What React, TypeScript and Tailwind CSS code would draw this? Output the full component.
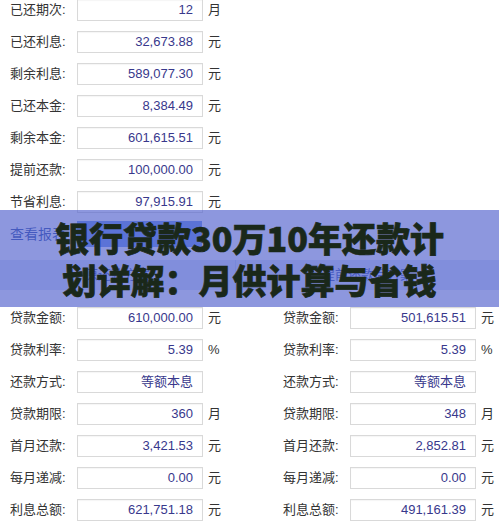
import React from "react";

const cjk = { fontFamily: '"Liberation Sans", "Noto Sans CJK SC", sans-serif' };

type Row = { label: string; value: string; unit?: string };

const topRows: Row[] = [
  { label: "已还期次", value: "12", unit: "月" },
  { label: "已还利息", value: "32,673.88", unit: "元" },
  { label: "剩余利息", value: "589,077.30", unit: "元" },
  { label: "已还本金", value: "8,384.49", unit: "元" },
  { label: "剩余本金", value: "601,615.51", unit: "元" },
  { label: "提前还款", value: "100,000.00", unit: "元" },
  { label: "节省利息", value: "97,915.91", unit: "元" },
];

const oldPlan: Row[] = [
  { label: "贷款金额", value: "610,000.00", unit: "元" },
  { label: "贷款利率", value: "5.39", unit: "%" },
  { label: "还款方式", value: "等额本息" },
  { label: "贷款期限", value: "360", unit: "月" },
  { label: "首月还款", value: "3,421.53", unit: "元" },
  { label: "每月递减", value: "0.00", unit: "元" },
  { label: "利息总额", value: "621,751.18", unit: "元" },
];

const newPlan: Row[] = [
  { label: "贷款金额", value: "501,615.51", unit: "元" },
  { label: "贷款利率", value: "5.39", unit: "%" },
  { label: "还款方式", value: "等额本息" },
  { label: "贷款期限", value: "348", unit: "月" },
  { label: "首月还款", value: "2,852.81", unit: "元" },
  { label: "每月递减", value: "0.00", unit: "元" },
  { label: "利息总额", value: "491,161.39", unit: "元" },
];

function Field({ row }: { row: Row }) {
  return (
    <div className="flex h-[22px] items-center text-[13px] text-[#333]">
      <span className="w-[77px] shrink-0 pl-[10px] whitespace-nowrap">{row.label}:</span>
      <div className="flex h-[22px] w-[126px] shrink-0 items-center justify-end border border-[#d9d9d9] bg-white pr-[9px] text-[#38388c] shadow-[inset_0_1px_1px_rgba(0,0,0,0.04)]">
        {row.value}
      </div>
      <span className="ml-[5px] text-[13px]">{row.unit}</span>
    </div>
  );
}

export default function App() {
  return (
    <div className="relative h-[524px] w-[499px] overflow-hidden bg-white" style={cjk}>
      {/* top block */}
      <div className="-mt-px flex flex-col gap-[10px]">
        {topRows.map((r) => (
          <Field key={r.label} row={r} />
        ))}
      </div>

      {/* actions + plan tabs (mostly under the banner) */}
      <div className="mt-[8px] flex h-[26px] items-center">
        <span className="w-[77px] shrink-0 pl-[10px] text-[14px] text-[#2f4fa6]">查看报表</span>
        <div className="h-[26px] w-[125px] bg-[#6f98ea]" />
      </div>
      <div className="mt-[13px] flex h-[30px] bg-[#dde5fa]">
        <div className="flex w-[236px] items-center justify-center border-r border-[#c4d0f2] text-[13px] text-[#3a56b0]">
          原还款方案
        </div>
        <div className="flex flex-1 items-center justify-center text-[13px] text-[#3a56b0]">
          提前还款后方案
        </div>
      </div>

      {/* two plans */}
      <div className="mt-[17px] flex">
        <div className="flex w-[273px] shrink-0 flex-col gap-[10px]">
          {oldPlan.map((r) => (
            <Field key={r.label} row={r} />
          ))}
        </div>
        <div className="flex flex-col gap-[10px]">
          {newPlan.map((r) => (
            <Field key={r.label} row={r} />
          ))}
        </div>
      </div>

      {/* banner overlay */}
      <div className="absolute left-0 top-[210px] flex h-[97px] w-full flex-col items-center justify-center bg-[rgba(80,95,205,0.65)]">
        <div
          className="text-center text-[34px] font-black leading-[42px] text-[#1a281a] [-webkit-text-stroke:0.7px_#1a281a]"
          style={{ fontFamily: '"Noto Sans CJK SC", "Noto Sans", sans-serif' }}
        >
          <div>银行贷款30万10年还款计</div>
          <div>划详解：月供计算与省钱</div>
        </div>
      </div>
    </div>
  );
}
